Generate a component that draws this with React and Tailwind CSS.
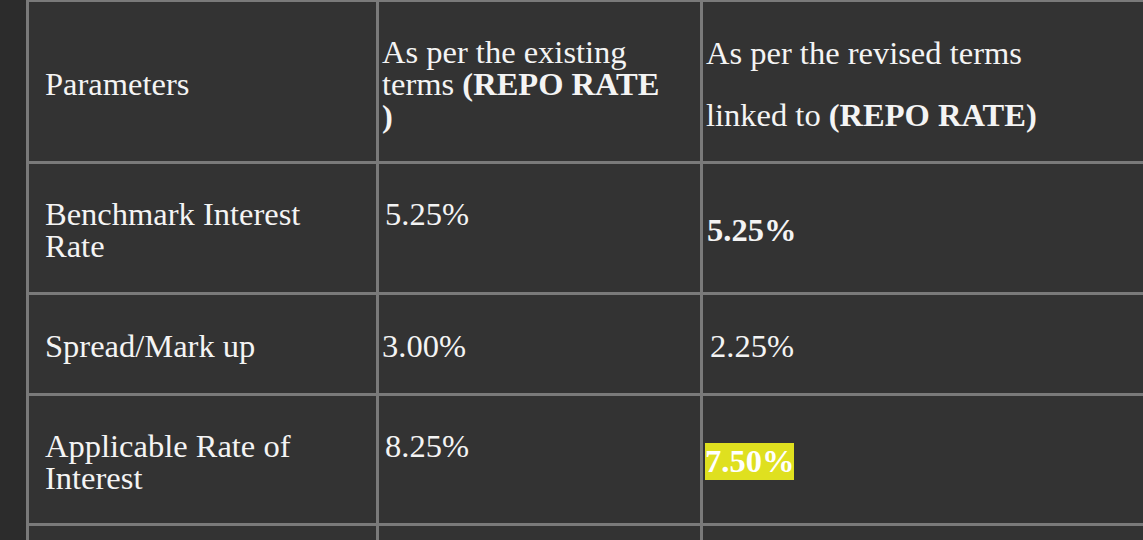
const Cell = ({ children, className = "" }) => (
  <div className={`bg-[#333333] flex items-center pt-[4px] ${className}`}>{children}</div>
);

const App = () => {
  return (
    <main className="flex h-[540px] overflow-hidden bg-[#2c2c2c] text-[#f4f4f4] font-['Georgia','Liberation_Serif',serif] text-[32.5px] leading-[32px]">
      <div className="w-[26px] shrink-0" />
      <div className="flex-1 overflow-hidden bg-[#7a7a7a] pl-[3px] pt-[2px]">
        <div className="grid grid-cols-[347px_321px_1fr] grid-rows-[159px_128px_98px_127px_130px] gap-[3px]">
          {/* header */}
          <Cell className="pl-[16px]">Parameters</Cell>
          <Cell className="pl-[3px]">
            <div>
              As per the existing
              <br />
              terms <b>(REPO RATE</b>
              <br />
              <b>)</b>
            </div>
          </Cell>
          <Cell className="pl-[3px]">
            <div className="leading-[62px]">
              As per the revised terms
              <br />
              linked to <b>(REPO RATE)</b>
            </div>
          </Cell>

          {/* benchmark */}
          <Cell className="pl-[16px]">
            <div>
              Benchmark Interest
              <br />
              Rate
            </div>
          </Cell>
          <Cell className="pl-[6px]">
            <div className="h-16">5.25%</div>
          </Cell>
          <Cell className="pl-[4px]">
            <b>5.25%</b>
          </Cell>

          {/* spread */}
          <Cell className="pl-[16px]">Spread/Mark up</Cell>
          <Cell className="pl-[3px]">3.00%</Cell>
          <Cell className="pl-[7px]">2.25%</Cell>

          {/* applicable */}
          <Cell className="pl-[16px]">
            <div>
              Applicable Rate of
              <br />
              Interest
            </div>
          </Cell>
          <Cell className="pl-[6px]">
            <div className="h-16">8.25%</div>
          </Cell>
          <Cell className="pl-[2px]">
            <b className="bg-[#dfe01f] text-white leading-[37px] inline-block">7.50%</b>
          </Cell>

          {/* next row, cut off */}
          <Cell />
          <Cell />
          <Cell />
        </div>
      </div>
    </main>
  );
};

export default App;
